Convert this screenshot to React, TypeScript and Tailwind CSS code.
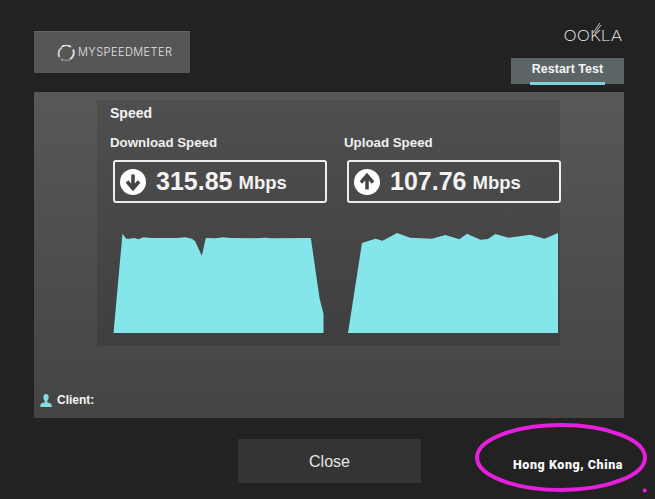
const sans = "font-['Liberation_Sans',Arial,sans-serif]";

function DownArrow() {
  return (
    <svg width="26" height="26" viewBox="0 0 26 26" className="shrink-0">
      <circle cx="13" cy="13" r="13" fill="#fff" />
      <path d="M13 5.500v13M7 12.500l6 7 6-7" fill="none" stroke="#444" strokeWidth="3.500" />
    </svg>
  );
}

function UpArrow() {
  return (
    <svg width="26" height="26" viewBox="0 0 26 26" className="shrink-0">
      <circle cx="13" cy="13" r="13" fill="#fff" />
      <path d="M13 20.500v-13M7 13.500l6-7 6 7" fill="none" stroke="#444" strokeWidth="3.500" />
    </svg>
  );
}

function SpeedBox({ value, up }: { value: string; up?: boolean }) {
  return (
    <div className="flex h-[43px] w-[214px] items-center rounded-[3px] border-2 border-[#eeeeee] pl-[5px]">
      {up ? <UpArrow /> : <DownArrow />}
      <span className="ml-[10px] text-[25px] font-bold leading-none text-[#f2f2f2]">{value}</span>
      <span className="ml-[6px] mt-[3px] text-[18.500px] font-bold leading-none text-[#f2f2f2]">Mbps</span>
    </div>
  );
}

const downloadPoints =
  "0,306 27,8 38,23 48,23 63,21 75,25 90,19 115,21 155,21 190,21 215,19 235,23 245,31 265,74 277,21 305,22 330,19 350,21 430,22 455,20 475,22 592,21 618,201 630,249 630,306";
const uploadPoints =
  "0,306 42,36 82,23 104,29 147,6 187,20 252,23 292,12 334,25 357,8 397,26 420,24 442,9 482,20 547,11 590,23 630,6 630,306";

export default function App() {
  return (
    <div className={`relative h-[499px] w-[655px] overflow-hidden bg-[#222222] pl-[34px] pt-[31px] ${sans}`}>
      <div className="flex h-[61px] w-[590px] items-start justify-between">
        <div className="flex h-[42px] w-[156px] items-center gap-[3px] border-t border-[#666] bg-[#565657] pl-[23px]">
          <svg width="18" height="16" viewBox="0 0 18 16">
            <path d="M2.500 12A7 7 0 0 1 5 2.500" fill="none" stroke="#c8c8c8" strokeWidth="2" />
            <path d="M4.500 2A8 8 0 0 1 14 2" fill="none" stroke="#f0f0f0" strokeWidth="1.500" />
            <path d="M16 4.500A7 7 0 0 1 13 14" fill="none" stroke="#d8d8d8" strokeWidth="2" />
            <path d="M13 14.500A8 8 0 0 1 4 14" fill="none" stroke="#8f8f8f" strokeWidth="2" />
          </svg>
          <span className="font-['Inter',sans-serif] text-[11px] font-light leading-none tracking-[0.45px] text-[#e4e4e4]">MYSPEEDMETER</span>
        </div>
        <div className="flex flex-col items-end">
          <div className="relative mr-[2px] mt-[-7px] h-[26px]">
            <span className="block origin-right scale-x-[1.17] font-['Inter',sans-serif] text-[15px] font-extralight leading-[24px] text-[#f4f4f4]">OOKLA</span>
            <svg width="10" height="12" viewBox="0 0 10 12" className="absolute left-[20px] top-[-2px]">
              <path d="M1 11 8 1M3 11 9 3" fill="none" stroke="#c4c4c4" strokeWidth="1" />
            </svg>
          </div>
          <div className="mt-[8px] flex h-[26px] w-[113px] flex-col items-center justify-between bg-[#5c6566]">
            <span className="mt-[4px] text-[12.500px] font-bold leading-[14px] text-[#f4f4f4]">Restart Test</span>
            <div className="h-[3px] w-[75px] translate-y-[1px] bg-[#79d3d8]" />
          </div>
        </div>
      </div>

      <div className="h-[326px] w-[590px] bg-gradient-to-b from-[#585858] to-[#444444] pl-[63px] pt-[8px]">
        <div className="h-[246px] w-[463px] bg-gradient-to-b from-[#4f4f4f] to-[#3f3f3f] pl-[13px]">
          <div className="pt-[5px] text-[14px] font-bold leading-4 text-[#f4f4f4]">Speed</div>
          <div className="mt-[14px] flex">
            <div className="w-[234px]">
              <div className="text-[13.300px] font-bold leading-4 text-[#f0f0f0]">Download Speed</div>
              <div className="ml-[3px] mt-[9px]">
                <SpeedBox value="315.85" />
              </div>
              <svg width="211" height="102" viewBox="0 0 630 306" className="ml-[3px] mt-[28px] block">
                <polygon points={downloadPoints} fill="#84e6ea" />
              </svg>
            </div>
            <div className="w-[216px]">
              <div className="text-[13.300px] font-bold leading-4 text-[#f0f0f0]">Upload Speed</div>
              <div className="ml-[3px] mt-[9px]">
                <SpeedBox value="107.76" up />
              </div>
              <svg width="210" height="102" viewBox="0 0 630 306" className="ml-[4px] mt-[28px] block">
                <polygon points={uploadPoints} fill="#84e6ea" />
              </svg>
            </div>
          </div>
        </div>
        <div className="-ml-[63px] mt-[46px] flex items-center pl-[6px]">
          <svg width="12" height="13" viewBox="0 0 13 15">
            <path d="M6.500 0C8.600 0 9.600 1.600 9.600 3.600c0 2-.9 3.600-1.600 4.400v1.600c1.600.6 5 1 5 3.400V15H0v-2c0-2.400 3.400-2.800 5-3.400V8C4.300 7.200 3.400 5.600 3.400 3.600 3.400 1.600 4.400 0 6.500 0z" fill="#84dde2" />
          </svg>
          <span className="ml-[5px] text-[12px] font-bold leading-4 text-[#f4f4f4]">Client:</span>
        </div>
      </div>

      <div className="ml-[204px] mt-[21px] flex h-[44px] w-[183px] items-center justify-center bg-[#343434] pt-[1px] text-[16px] text-[#e6e6e6]">
        Close
      </div>

      <span className="absolute left-[513px] top-[457px] font-['Roboto',sans-serif] text-[12.500px] font-black leading-4 tracking-[0.55px] text-[#f6f6f6]">
        Hong Kong, China
      </span>
      <svg width="655" height="499" className="pointer-events-none absolute left-0 top-0">
        <ellipse cx="561" cy="457.500" rx="84" ry="32.500" fill="none" stroke="#e61fdc" strokeWidth="4" />
        <circle cx="644.700" cy="490.500" r="2" fill="#e61fdc" />
      </svg>
    </div>
  );
}
